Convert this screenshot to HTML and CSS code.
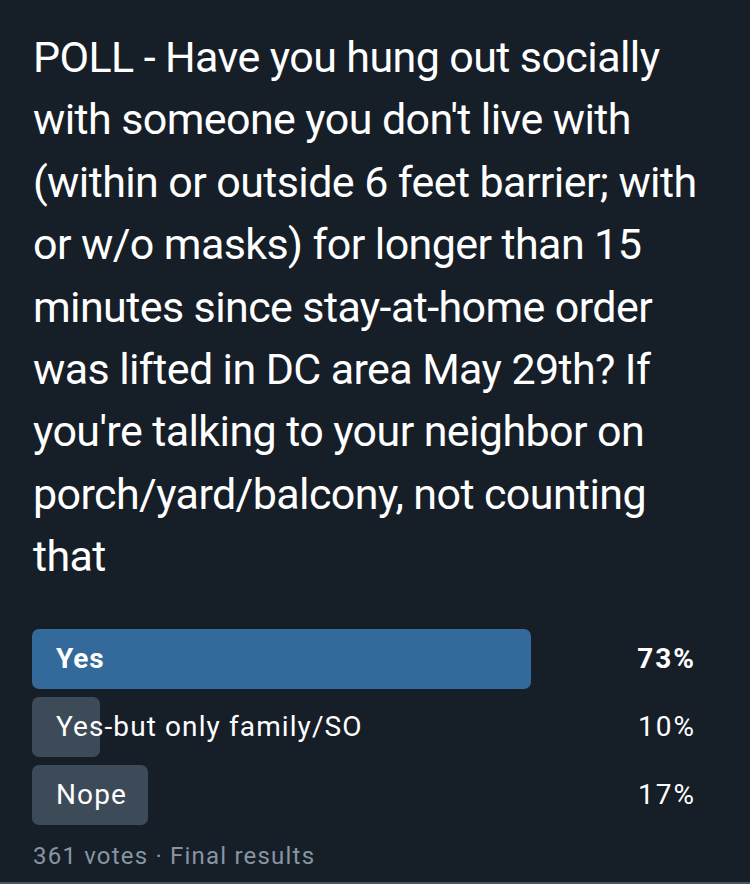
FILE: index.html
```html
<!DOCTYPE html>
<html lang="en">
<head>
<meta charset="utf-8">
<title>Poll</title>
<link rel="stylesheet" href="styles.css">
</head>
<body>
<main class="tweet">
  <p class="question">POLL - Have you hung out socially<br>with someone you don't live with<br>(within or outside 6 feet barrier; with<br>or w/o masks) for longer than 15<br>minutes since stay-at-home order<br>was lifted in DC area May 29th? If<br>you're talking to your neighbor on<br>porch/yard/balcony, not counting<br>that</p>
  <div class="poll">
    <div class="option winner">
      <div class="bar" style="--pct:73"></div>
      <span class="label">Yes</span>
      <span class="percent">73%</span>
    </div>
    <div class="option">
      <div class="bar" style="--pct:10"></div>
      <span class="label">Yes-but only family/SO</span>
      <span class="percent">10%</span>
    </div>
    <div class="option">
      <div class="bar" style="--pct:17"></div>
      <span class="label">Nope</span>
      <span class="percent">17%</span>
    </div>
  </div>
  <p class="meta">361 votes · Final results</p>
</main>
</body>
</html>
```

FILE: styles.css
```css
html, body {
  margin: 0;
  padding: 0;
  background: #161e28;
}

body {
  font-family: Roboto, "Noto Sans", sans-serif;
  color: #ffffff;
  height: 884px;
  box-sizing: border-box;
  border-bottom: 2px solid #4a5561;
  overflow: hidden;
}

.tweet {
  padding: 26px 56px 0 32px;
}

.question {
  margin: 0 0 41px 1px;
  font-size: 43px;
  line-height: 62.4px;
  font-weight: 400;
  letter-spacing: -0.6px;
  white-space: nowrap;
}

.poll {
  display: flex;
  flex-direction: column;
  gap: 8px;
}

.option {
  display: grid;
  grid-template-columns: 1fr auto;
  align-items: center;
  height: 60px;
  font-size: 28px;
}

.bar {
  grid-column: 1 / 3;
  grid-row: 1;
  align-self: stretch;
  width: calc(var(--pct) * 6.84px);
  background: #3d4b59;
  border-radius: 7px;
}

.winner .bar {
  background: #34699b;
}

.label {
  grid-column: 1;
  grid-row: 1;
  padding-left: 24px;
  letter-spacing: 1.1px;
  white-space: nowrap;
  position: relative;
}

.percent {
  grid-column: 2;
  grid-row: 1;
  text-align: right;
  letter-spacing: 2px;
  margin-right: -2px;
  position: relative;
}

.winner .label {
  font-weight: 700;
  letter-spacing: 0.8px;
}

.winner .percent {
  font-weight: 700;
}

.meta {
  margin: 16px 0 0 1px;
  font-size: 24px;
  line-height: 30px;
  letter-spacing: 1.2px;
  color: #8795a3;
}
```
